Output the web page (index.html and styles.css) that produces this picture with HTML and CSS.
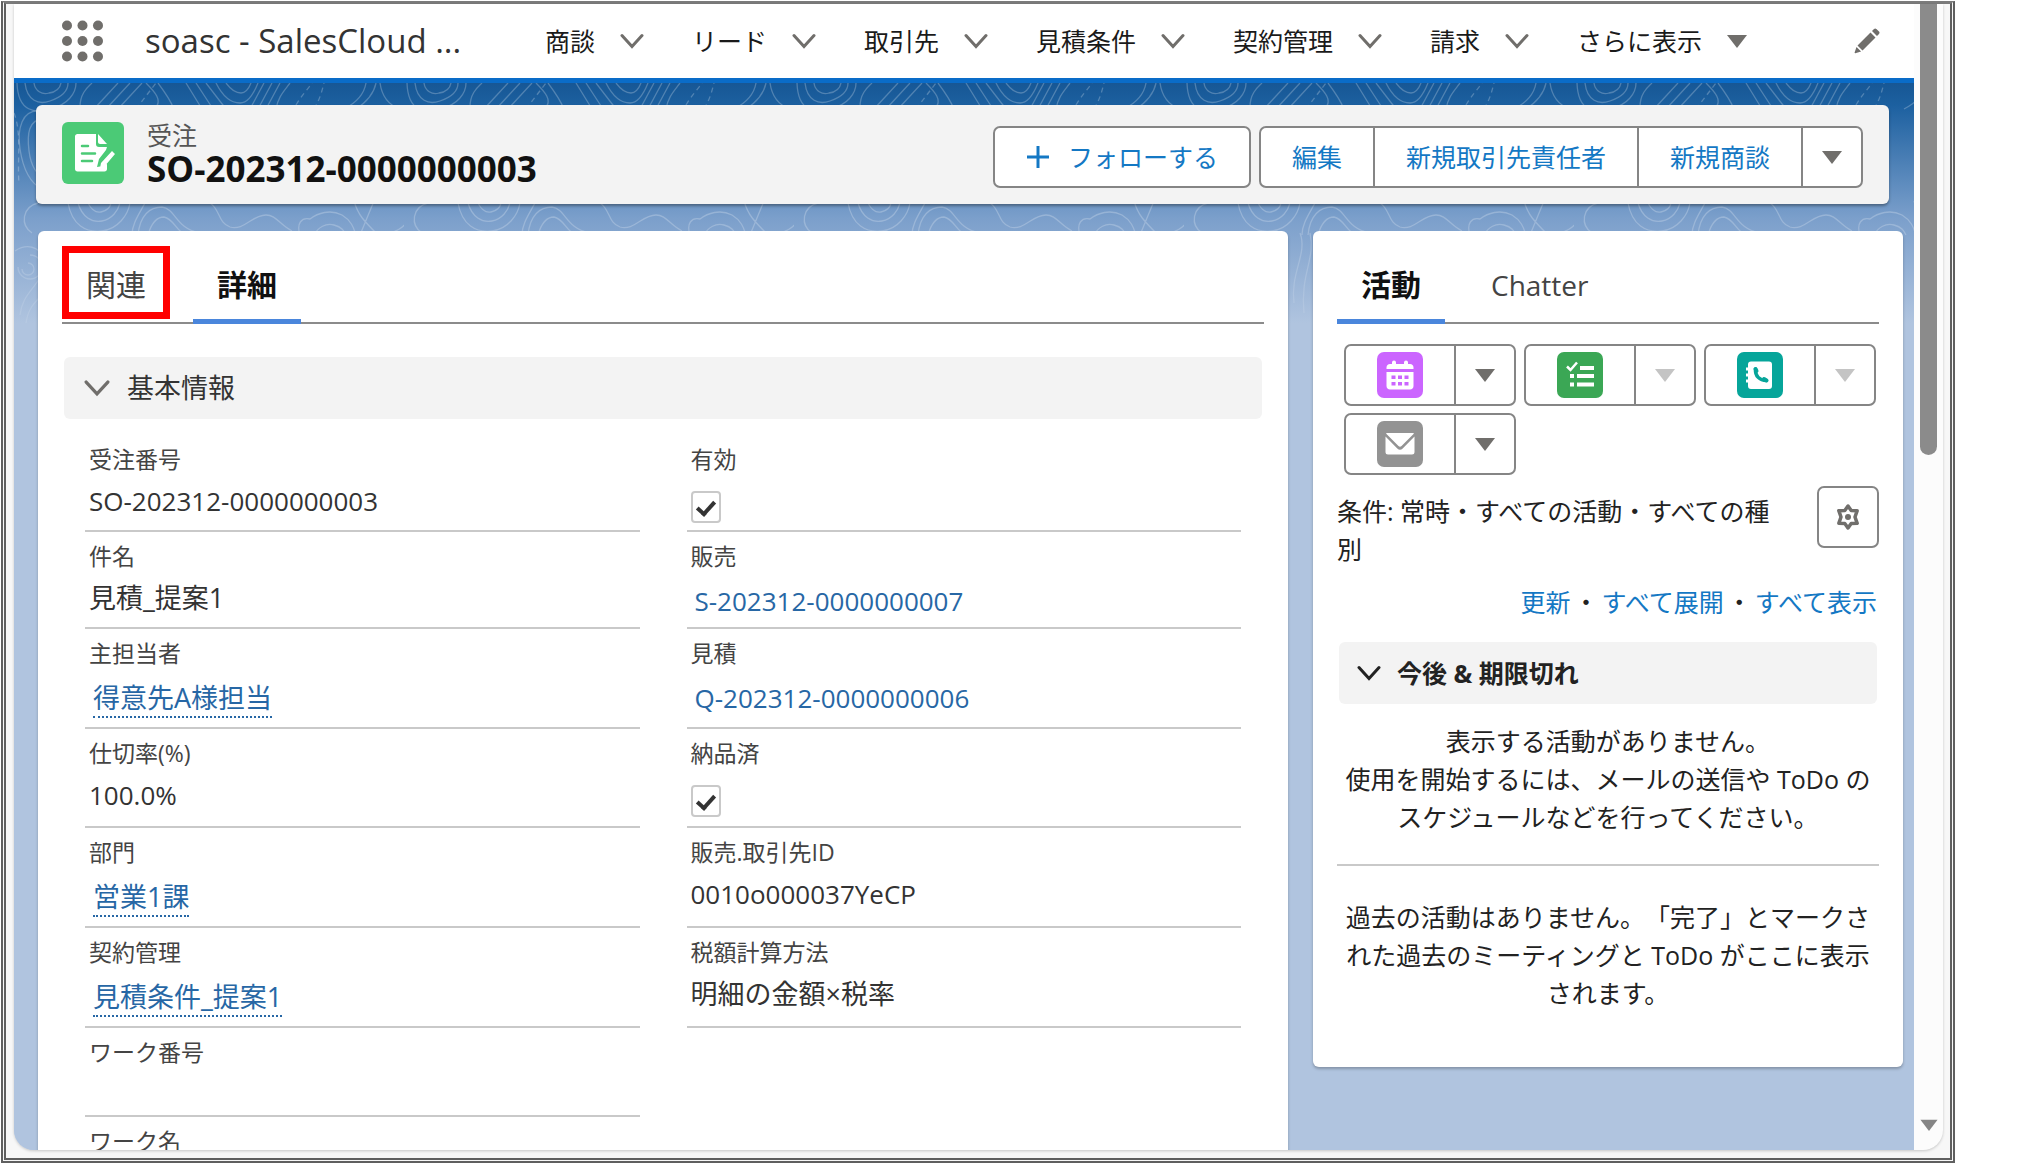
FILE: index.html
```html
<!DOCTYPE html>
<html lang="ja">
<head>
<meta charset="utf-8">
<meta name="viewport" content="width=device-width, initial-scale=1">
<title>SO-202312-0000000003 | 受注</title>
<link rel="stylesheet" href="styles.css">
</head>
<body>
<svg class="defs" width="0" height="0" aria-hidden="true">
  <symbol id="chevron" viewBox="0 0 24 16"><path d="M2 2.500 12 13.500 22 2.500" fill="none" stroke="currentColor" stroke-width="3" stroke-linecap="round"/></symbol>
  <symbol id="down" viewBox="0 0 20 14"><path d="M0 1h20L10 14z" fill="currentColor"/></symbol>
</svg>
<div class="frame">
  <div class="app">
    <div class="screen">
      <header class="topbar">
        <button class="launcher" aria-label="アプリケーションランチャー">
          <svg width="41" height="42" viewBox="0 0 41 42" fill="#706e6b"><circle cx="5" cy="5.500" r="5"/><circle cx="20.500" cy="5.500" r="5"/><circle cx="36" cy="5.500" r="5"/><circle cx="5" cy="21" r="5"/><circle cx="20.500" cy="21" r="5"/><circle cx="36" cy="21" r="5"/><circle cx="5" cy="36.500" r="5"/><circle cx="20.500" cy="36.500" r="5"/><circle cx="36" cy="36.500" r="5"/></svg>
        </button>
        <span class="app-name">soasc - SalesCloud ...</span>
        <nav class="nav">
          <a class="nav-item" href="#">商談<svg class="chev"><use href="#chevron"/></svg></a>
          <a class="nav-item" href="#">リード<svg class="chev"><use href="#chevron"/></svg></a>
          <a class="nav-item" href="#">取引先<svg class="chev"><use href="#chevron"/></svg></a>
          <a class="nav-item" href="#">見積条件<svg class="chev"><use href="#chevron"/></svg></a>
          <a class="nav-item" href="#">契約管理<svg class="chev"><use href="#chevron"/></svg></a>
          <a class="nav-item" href="#">請求<svg class="chev"><use href="#chevron"/></svg></a>
          <a class="nav-item" href="#">さらに表示<svg class="tri"><use href="#down"/></svg></a>
        </nav>
        <button class="edit-nav" aria-label="ナビゲーション項目を編集">
          <svg width="26" height="26" viewBox="0 0 26 26" fill="#706e6b"><path d="M3.500 17.500 16.500 4.500l5 5-13 13zM18 3l2-2c.8-.8 1.700-.8 2.400 0L25 3.600c.7.700.7 1.600 0 2.400l-2 2zM2.500 19l4.600 4.600L1.300 25.300c-.4.100-.8-.2-.7-.7z"/></svg>
        </button>
      </header>
      <div class="workspace">
        <svg class="contours" width="100%" height="260" aria-hidden="true">
          <defs>
            <pattern id="topo" x="0" y="0" width="390" height="260" patternUnits="userSpaceOnUse">
              <g fill="none" stroke="#fff" stroke-opacity=".24" stroke-width="1.300">
                <path d="M3 0C4 30 22 30 36 26 54 22 62 10 62 0M11 0c2 18 14 22 25 18C48 14 54 8 54 0M20 0c1 8 8 12 15 10 7-1 11-5 12-10"/>
                <path d="M66 24C66 10 74 4 78 0M80 26 104 0M92 26 116 0M104 26 128 0M140 26C150 18 140 8 132 0M160 26C156 16 150 8 144 0"/>
                <path d="M172 0l16 26M182 0l17 26M192 0l20 26M202 0c8 16 16 20 24 20s14-10 18-20M212 0c6 8 10 10 15 10s8-5 10-10M236 26 250 0M244 26 258 0M252 26 266 0M262 26c2-12 8-18 14-26"/>
                <path d="M330 26c12-6 20-14 22-26M342 26c12-8 18-16 20-26M366 0c2 14 8 22 20 26"/>
                <path stroke-dasharray="5 4" d="M122 26 142 0M282 22c6-10 12-16 16-22M300 26c6-10 8-18 10-26M0 30c8 20 3 50 5 70"/>
                <path d="M26 28C8 26 3 46 6 66s10 34 22 40M30 36c-16 0-17 16-15 32s8 24 18 30M34 46c-10 2-12 14-10 24"/>
                <path d="M54 120c4 22 18 30 34 28s26-16 28-28M64 120c4 14 14 20 24 18s16-10 18-18M74 120c4 8 8 10 13 9s9-4 10-9"/>
                <path d="M24 120c-16 4-18 22-6 30M124 152c2-20 12-28 24-28 14 2 14 22 38 26M134 152c4-14 10-18 16-18 10 2 12 14 22 18M118 152c0-12 8-22 14-34M196 120c10 6 8 20 20 24 14 4 22-12 36-12 10 0 14 10 26 16"/>
                <path d="M286 152c-4-12 2-18 10-16 8-6 20-10 32-4 10 6 12 14 14 20M300 152c4-8 12-12 20-10 8 2 10 6 12 10M340 118c4 14 10 20 24 34M360 118l-14 34M374 152c6-4 14-6 16-10"/>
                <path d="M4 184a12 12 0 1 0 12-12M1 168c12-8 24-4 28 6M8 186a6 6 0 1 0 6-6M6 232c2-18 12-24 22-40M12 240c2-14 8-20 16-28"/>
                <path d="M116 150c8 20-10 40-6 70M126 150c6 26-10 40-6 80"/>
              </g>
            </pattern>
            <linearGradient id="fade" x1="0" y1="0" x2="0" y2="1"><stop offset=".5" stop-color="#fff"/><stop offset="1" stop-color="#fff" stop-opacity=".3"/></linearGradient>
            <mask id="fade-mask"><rect width="100%" height="260" fill="url(#fade)"/></mask>
          </defs>
          <rect width="100%" height="260" fill="url(#topo)" mask="url(#fade-mask)"/>
        </svg>

        <section class="record-header">
          <svg class="record-icon" width="62" height="62" viewBox="0 0 62 62"><rect width="62" height="62" rx="6" fill="#4bca76"/><path fill="#fff" d="M15.500 12H34v10c0 2 1 3 3 3h8l-1 3-7 9-2 8 6-1 4-2v5c0 1.500-1 2.500-2.500 2.500h-27c-1.500 0-2.500-1-2.500-2.500V14.500c0-1.500 1-2.500 2.500-2.500zM36 12l9 10h-7c-1 0-2-1-2-2zM50 29l3 3-11 13-4 1 1-5z"/><path stroke="#4bca76" stroke-width="2.500" stroke-linecap="round" d="M20 24h6M20 31.500h13M20 39h10"/></svg>
          <div class="record-title">
            <p class="record-type">受注</p>
            <h1>SO-202312-0000000003</h1>
          </div>
          <div class="actions">
            <button class="btn follow"><svg width="24" height="26" viewBox="0 0 24 26"><path d="M12 2v22M1 13h22" stroke="currentColor" stroke-width="3"/></svg>フォローする</button>
            <div class="btn-group">
              <button class="btn">編集</button><button class="btn">新規取引先責任者</button><button class="btn">新規商談</button><button class="btn more" aria-label="さらにアクションを表示"><svg class="tri"><use href="#down"/></svg></button>
            </div>
          </div>
        </section>

        <div class="columns">
          <main class="card">
            <div class="tabs" role="tablist">
              <button class="tab marked" role="tab">関連</button>
              <button class="tab active" role="tab" aria-selected="true">詳細</button>
            </div>
            <h2 class="section-head"><svg class="chev big"><use href="#chevron"/></svg>基本情報</h2>
            <div class="fields">
              <div class="field"><span class="label">受注番号</span><span class="value">SO-202312-0000000003</span></div>
              <div class="field"><label class="label" for="valid">有効</label><input class="check" type="checkbox" id="valid" checked></div>
              <div class="field"><span class="label">件名</span><span class="value kanji">見積_提案1</span></div>
              <div class="field"><span class="label">販売</span><a class="value link" href="#">S-202312-0000000007</a></div>
              <div class="field"><span class="label">主担当者</span><a class="value kanji link dotted" href="#">得意先A様担当</a></div>
              <div class="field"><span class="label">見積</span><a class="value link" href="#">Q-202312-0000000006</a></div>
              <div class="field tall"><span class="label">仕切率(%)</span><span class="value">100.0%</span></div>
              <div class="field tall"><label class="label" for="delivered">納品済</label><input class="check" type="checkbox" id="delivered" checked></div>
              <div class="field"><span class="label">部門</span><a class="value kanji link dotted" href="#">営業1課</a></div>
              <div class="field"><span class="label">販売.取引先ID</span><span class="value">0010o000037YeCP</span></div>
              <div class="field"><span class="label">契約管理</span><a class="value kanji link dotted" href="#">見積条件_提案1</a></div>
              <div class="field"><span class="label">税額計算方法</span><span class="value kanji">明細の金額×税率</span></div>
              <div class="field blank"><span class="label">ワーク番号</span></div>
              <div></div>
              <div class="field"><span class="label">ワーク名</span></div>
            </div>
          </main>

          <aside class="card side">
            <div class="tabs" role="tablist">
              <button class="tab active" role="tab" aria-selected="true">活動</button>
              <button class="tab latin" role="tab">Chatter</button>
            </div>
            <div class="composers">
              <div class="btn-group">
                <button class="btn compose" aria-label="行動"><svg width="46" height="46" viewBox="0 0 46 46"><rect width="46" height="46" rx="7" fill="#cb65ff"/><path fill="#fff" d="M13 12h2v-1.500a2 2 0 0 1 4 0V12h8v-1.500a2 2 0 0 1 4 0V12h2c2 0 3.500 1.500 3.500 3.500V17h-27v-1.500C9.500 13.500 11 12 13 12zM9.500 20h27v14c0 2-1.500 3.500-3.500 3.500H13c-2 0-3.500-1.500-3.500-3.500z"/><path fill="#cb65ff" d="M14.500 23.500h4V27h-4zM21 23.500h4V27h-4zM27.500 23.500h4V27h-4zM14.500 30h4v3.500h-4zM21 30h4v3.500h-4zM27.500 30h4v3.500h-4z"/></svg></button><button class="btn more" aria-label="行動メニュー"><svg class="tri"><use href="#down"/></svg></button>
              </div>
              <div class="btn-group">
                <button class="btn compose" aria-label="ToDo"><svg width="46" height="46" viewBox="0 0 46 46"><rect width="46" height="46" rx="7" fill="#3ba755"/><path fill="none" stroke="#fff" stroke-width="2.500" d="M10 14.500l3.500 3.500L20 10.500"/><path fill="#fff" d="M23 14h14v4H23zM20 22h17v4H20zM20 30.500h17v4H20zM13 22h4v4h-4zM13 30.500h4v4h-4z"/></svg></button><button class="btn more" disabled aria-label="ToDoメニュー"><svg class="tri"><use href="#down"/></svg></button>
              </div>
              <div class="btn-group">
                <button class="btn compose" aria-label="活動の記録"><svg width="46" height="46" viewBox="0 0 46 46"><rect width="46" height="46" rx="7" fill="#06a59a"/><path fill="#fff" d="M14 9.500h18c2 0 3 1 3 3v21.500c0 2-1 3-3 3H14c-2 0-3-1-3-3v-3.500H9v-3h2v-3H9v-3h2v-3H9v-3h2v-3c0-2 1-3 3-3z"/><path fill="none" stroke="#06a59a" stroke-width="3.500" stroke-linecap="round" d="M18.500 17c-.5 7 4 11.500 11 11.500"/><path fill="none" stroke="#06a59a" stroke-width="4" stroke-linecap="round" d="M18.500 17l1 2M27 27l2.500 1.500"/></svg></button><button class="btn more" disabled aria-label="活動の記録メニュー"><svg class="tri"><use href="#down"/></svg></button>
              </div>
              <div class="btn-group">
                <button class="btn compose" aria-label="メール"><svg width="46" height="46" viewBox="0 0 46 46"><rect width="46" height="46" rx="7" fill="#939393"/><path fill="#fff" d="M10 12h26c.8 0 1 .5.5 1L24.500 25c-1 1-2 1-3 0L9.500 13c-.5-.5-.3-1 .5-1zM8.500 15.500l11.800 12c1.700 1.600 3.700 1.600 5.400 0l11.800-12V31c0 1.700-1 2.500-2.500 2.500H11c-1.500 0-2.500-.8-2.500-2.500z"/></svg></button><button class="btn more" aria-label="メールメニュー"><svg class="tri"><use href="#down"/></svg></button>
              </div>
            </div>
            <div class="filter">
              <p>条件: 常時・すべての活動・すべての種別</p>
              <button class="btn gear" aria-label="タイムラインの設定"><svg width="26" height="28" viewBox="0 0 26 28"><path fill="none" stroke="#706e6b" stroke-width="3.500" stroke-linejoin="round" d="M13 3l3.200 4.500 6 .2-2.200 6.300 2.200 6.300-6 .2L13 25l-3.200-4.500-6-.2L6 14 3.800 7.700l6-.2z"/><circle cx="13" cy="14" r="3" fill="#706e6b"/></svg></button>
            </div>
            <p class="timeline-links"><a href="#">更新</a><span class="dot">・</span><a href="#">すべて展開</a><span class="dot">・</span><a href="#">すべて表示</a></p>
            <h2 class="section-head strong"><svg class="chev"><use href="#chevron"/></svg>今後 &amp; 期限切れ</h2>
            <p class="notice">表示する活動がありません。<br>使用を開始するには、メールの送信や ToDo のスケジュールなどを行ってください。</p>
            <p class="notice past">過去の活動はありません。「完了」とマークされた過去のミーティングと ToDo がここに表示されます。</p>
          </aside>
        </div>
      </div>
    </div>
    <div class="scrollbar" aria-hidden="true">
      <div class="thumb"></div>
      <svg class="tri"><use href="#down"/></svg>
    </div>
  </div>
</div>
</body>
</html>
```
FILE: styles.css
```css
* { box-sizing: border-box; }

body {
  margin: 0;
  padding: 1px 72px 0 1px;
  background: #fff;
  color: #222;
  font-family: "Open Sans", "Noto Sans CJK JP", sans-serif;
  font-size: 25px;
  line-height: 38px;
  text-spacing-trim: space-all;
}

h1, h2, p { margin: 0; font-weight: 400; }
a { color: #1478c4; text-decoration: none; }
button { font: inherit; color: inherit; margin: 0; padding: 0; border: 0; background: none; }
svg { display: block; flex: none; }
.defs { position: absolute; }

.chev { width: 24px; height: 16px; color: #706e6b; }
.chev.big { width: 26px; height: 18px; }
.tri { width: 20px; height: 14px; color: #706e6b; }

/* Window frame */
.frame {
  height: calc(100vh - 7px);
  padding: 0 7px 8px 8px;
  border: 5px double #5f5f5f;
  border-top: 3px solid #7b7b7b;
  background: #f7f7f7;
}
.app {
  display: flex;
  height: 100%;
  overflow: hidden;
  border-radius: 0 0 20px 20px;
  background: #fcfcfc;
  box-shadow: 0 1px 3px rgba(0, 0, 0, .2);
}
.screen {
  flex: 1;
  min-width: 0;
  display: flex;
  flex-direction: column;
}
.scrollbar {
  width: 29px;
  display: flex;
  flex-direction: column;
  align-items: center;
  justify-content: space-between;
  padding-bottom: 19px;
}
.thumb { width: 17px; height: 40%; background: #8b8b8b; border-radius: 0 0 9px 9px; }
.scrollbar .tri { width: 18px; height: 12px; color: #858585; }

/* Navigation */
.topbar {
  display: flex;
  align-items: center;
  height: 79px;
  flex: none;
  padding: 0 34px 0 48px;
  border-bottom: 5px solid #0a6cc8;
  background: #fff;
}
.launcher { width: 41px; margin-right: 42px; }
.app-name { width: 376px; font-size: 33px; color: #333; white-space: nowrap; }
.nav { display: flex; flex: 1; }
.nav-item { display: flex; align-items: center; gap: 25px; padding: 0 24px; color: #1a1a1a; white-space: nowrap; }

/* Workspace */
.workspace {
  position: relative;
  flex: 1;
  min-height: 0;
  background: #b0c4df linear-gradient(#175795 0, #1c60a0 22px, #7b9fcb 135px, #b0c4df 240px);
}
.contours { position: absolute; top: 0; left: 0; }

.record-header {
  position: relative;
  display: flex;
  height: 99px;
  margin: 22px 25px 27px 22px;
  padding: 17px 26px 0;
  border-radius: 6px;
  background: #f3f3f3;
  box-shadow: 0 2px 3px rgba(0, 0, 0, .35);
}
.record-title { flex: 1; margin-left: 23px; }
.record-type { margin-top: -4px; line-height: 34px; color: #555; }
h1 { font-size: 35px; font-weight: 700; line-height: 34px; color: #111; }
.actions { display: flex; gap: 8px; margin-top: 4px; }

.btn {
  height: 62px;
  padding: 0 31px;
  display: flex;
  align-items: center;
  justify-content: center;
  border: 2px solid #858585;
  border-radius: 7px;
  background: #fff;
  color: #1478c4;
  white-space: nowrap;
}
.follow { gap: 18px; }
.btn-group { display: flex; }
.btn-group .btn { border-radius: 0; margin-left: -2px; }
.btn-group .btn:first-child { margin-left: 0; border-radius: 7px 0 0 7px; }
.btn-group .btn:last-child { border-radius: 0 7px 7px 0; }
.btn.more { width: 62px; padding: 0; }
.btn.more:disabled .tri { color: #c4c4c4; }

.columns {
  position: relative;
  display: grid;
  grid-template-columns: 125fr 59fr;
  align-items: start;
  gap: 25px;
  padding: 0 11px 0 24px;
  height: calc(100% - 148px);
  overflow: hidden;
}
.card {
  min-width: 0;
  padding: 15px 24px 0;
  border-radius: 6px;
  background: #fff;
  box-shadow: 0 2px 3px rgba(0, 0, 0, .25);
}

.tabs { display: flex; gap: 23px; border-bottom: 2px solid #8b8b8b; }
.tab {
  height: 78px;
  margin-bottom: -2px;
  padding: 5px 23px 0;
  border-bottom: 5px solid transparent;
  font-size: 30px;
  color: #444;
}
.tab:first-child, .tab.active { min-width: 108px; }
.tab.active { border-color: #4a86dc; font-weight: 700; color: #111; }
.tab.marked { outline: 7px solid #f00; outline-offset: -7px; height: 73px; border: 0; }
.tab.latin { font-size: 28px; }

.section-head {
  display: flex;
  align-items: center;
  gap: 17px;
  height: 62px;
  margin: 33px 2px 16px;
  padding: 0 20px;
  border-radius: 6px;
  background: #f3f3f3;
  font-size: 27px;
  color: #333;
}

.fields {
  display: grid;
  grid-template-columns: 1fr 1fr;
  column-gap: 47px;
  padding: 0 23px;
}
.field {
  display: flex;
  flex-direction: column;
  align-items: flex-start;
  min-height: 97px;
  padding: 7px 4px 9px;
  border-bottom: 2px solid #c9c9c9;
}
.field.tall { min-height: 99px; }
.field.blank { min-height: 89px; }
.label { font-size: 23px; line-height: 34px; color: #444; }
.value { margin-top: 8px; font-size: 26px; line-height: 34px; color: #333; }
.value.kanji { font-size: 27px; }
.value.link { margin: 11px 4px 0; color: #2767a5; }
.value.dotted { padding-bottom: 1px; border-bottom: 2px dotted #2767a5; }
.check {
  appearance: none;
  width: 30px;
  height: 32px;
  margin: 15px 0 -2px;
  border: 2px solid #c9c9c9;
  border-radius: 4px;
  display: grid;
  place-items: center;
}
.check:checked::before {
  content: "";
  width: 14px;
  height: 7px;
  border: solid #333;
  border-width: 0 0 4px 4px;
  transform: translateY(-1px) rotate(-48deg);
}

/* Activity panel */
.side { padding-bottom: 55px; }
.composers { display: flex; flex-wrap: wrap; gap: 7px 8px; margin: 20px 0 0 7px; }
.btn.compose { width: 112px; padding: 0; }
.filter { display: flex; justify-content: space-between; align-items: flex-start; margin-top: 11px; }
.filter p { padding-top: 6px; margin-right: 24px; }
.btn.gear { width: 62px; padding: 0; flex: none; }
.timeline-links { margin: 15px 2px 0; text-align: right; }
.timeline-links .dot { margin: 0 3px; }
.section-head.strong { gap: 16px; margin: 21px 2px 18px; padding: 0 18px; font-size: 25px; font-weight: 700; color: #222; }
.section-head.strong .chev { color: #222; }
.notice { text-align: center; }
.past { margin-top: 28px; padding-top: 32px; border-top: 2px solid #c9c9c9; }
```
